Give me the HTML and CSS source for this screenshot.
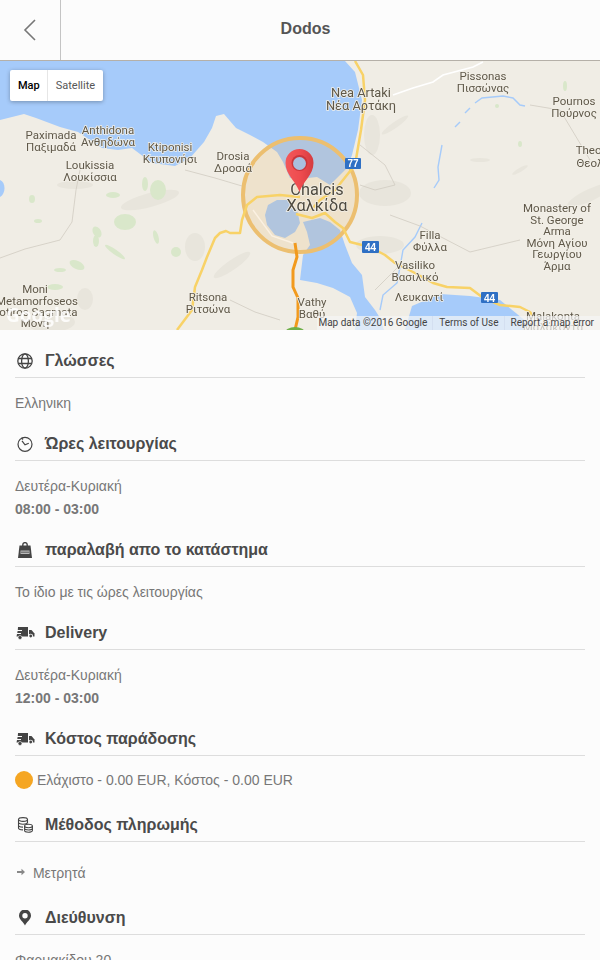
FILE: index.html
```html
<!DOCTYPE html>
<html lang="el">
<head>
  <meta charset="UTF-8" />
  <title>Dodos</title>
  <meta name="viewport" content="width=device-width, initial-scale=1">
  <link rel="stylesheet" href="styles.css">
</head>
<body>
  <header class="topbar">
    <a class="back" href="#">
      <svg width="16" height="24" viewBox="0 0 16 24"><path d="M13 2 3 12l10 10" fill="none" stroke="#777" stroke-width="1.6"/></svg>
    </a>
    <div class="title">Dodos</div>
    <div class="spare"></div>
  </header>

  <div class="map">
    <svg class="map-art" width="600" height="269" viewBox="0 61 600 269">
      <defs>
        <linearGradient id="pinFill" x1="0" x2="1" y1="0" y2="0">
          <stop offset="0" stop-color="#f2585a"/>
          <stop offset=".55" stop-color="#ee4b4e"/>
          <stop offset="1" stop-color="#d43c40"/>
        </linearGradient>
      </defs>
      <rect x="0" y="61" width="600" height="269" fill="#f0ede5"/>
      <!-- terrain -->
      <g fill="#e8e5dc">
        <ellipse cx="150" cy="200" rx="30" ry="7" transform="rotate(-15 150 200)"/>
        <ellipse cx="75" cy="185" rx="18" ry="4"/>
        <ellipse cx="195" cy="247" rx="10" ry="14"/>
        <ellipse cx="232" cy="265" rx="22" ry="5" transform="rotate(-35 232 265)"/>
        <ellipse cx="85" cy="299" rx="8" ry="11"/>
        <ellipse cx="395" cy="125" rx="16" ry="3" transform="rotate(-35 395 125)"/>
        <ellipse cx="385" cy="193" rx="26" ry="13"/>
        <ellipse cx="380" cy="245" rx="24" ry="9"/>
        <ellipse cx="372" cy="135" rx="8" ry="20"/>
        <ellipse cx="50" cy="322" rx="25" ry="10"/>
        <ellipse cx="590" cy="195" rx="25" ry="6" transform="rotate(-25 590 195)"/>
        <ellipse cx="480" cy="160" rx="10" ry="2"/>
        <ellipse cx="520" cy="170" rx="9" ry="2" transform="rotate(-30 520 170)"/>
      </g>
      <g fill="#d9e7ca">
        <ellipse cx="145" cy="184" rx="3" ry="7"/>
        <ellipse cx="158" cy="190" rx="8" ry="10"/>
        <ellipse cx="125" cy="222" rx="11" ry="8"/>
        <ellipse cx="113" cy="195" rx="7" ry="3"/>
        <ellipse cx="97" cy="232" rx="4" ry="6" transform="rotate(-30 97 232)"/>
        <ellipse cx="115" cy="252" rx="12" ry="2.500" transform="rotate(35 115 252)"/>
        <ellipse cx="96" cy="241" rx="3" ry="6"/>
        <ellipse cx="77" cy="265" rx="8" ry="4" transform="rotate(25 77 265)"/>
        <ellipse cx="176" cy="252" rx="5" ry="5"/>
        <ellipse cx="156" cy="237" rx="2.500" ry="7" transform="rotate(-15 156 237)"/>
        <ellipse cx="60" cy="270" rx="6" ry="2"/>
        <ellipse cx="32" cy="199" rx="3" ry="4"/>
        <ellipse cx="38" cy="221" rx="4" ry="2"/>
        <ellipse cx="55" cy="287" rx="8" ry="3"/>
        <ellipse cx="565" cy="86" rx="2" ry="5"/>
        <ellipse cx="520" cy="144" rx="2" ry="3"/>
        <ellipse cx="497" cy="106" rx="2" ry="2"/>
      </g>
      <!-- water -->
      <g fill="#a6cbfa">
        <path d="M0 61H345L355 72 362 100 358 130 352 155 347 168 330 185 317 177 308 178 290 178 283 162 277 152 263 142 250 135 236 128 224 114 216 116 212 128 204 142 190 158 175 166 152 163 132 148 118 150 102 148 78 132 60 127 36 118 24 114 0 120Z"/>
        <path d="M0 180c6 2 6 14 0 17Z"/>
        <path d="M268 205 277 200 288 200 297 210 300 223 295 232 285 238 275 235 267 225 265 215Z"/>
        <path d="M303 222 320 218 330 222 340 230 345 245 352 263 362 275 365 297 375 310 380 318 384 330H355L357 313 350 297 333 288 317 283 300 280 303 255 310 245 307 232Z"/>
        <path d="M405 330 412 306 440 294 470 296 500 300 522 318 536 330Z"/>
      </g>
      <g fill="none" stroke="#a6cbfa" stroke-width="1.400">
        <path d="M442 145 438 167 439 180 434 188"/>
        <path d="M460 122 455 127"/>
        <path d="M470 108 465 113"/>
        <path d="M475 103 482 98 503 96 513 98 520 105 525 106"/>
        <path d="M422 223 415 237 403 250 400 267 397 283 383 295 380 310"/>
      </g>
      <!-- borders -->
      <g fill="none" stroke="#d0ccc2" stroke-width=".8">
        <path d="M0 258 25 249 60 240 72 222 76 190 80 170"/>
        <path d="M185 170 215 178 242 186"/>
        <path d="M230 300 255 312 280 320"/>
        <path d="M360 145 385 165 395 185 375 190 360 185"/>
        <path d="M530 105 560 110 575 135 590 160"/>
        <path d="M390 215 420 226 470 252 520 240"/>
        <path d="M375 290 400 265"/>
      </g>
      <path d="M483 62 473 67 443 75 433 82 413 88 393 95" fill="none" stroke="#fff" stroke-width="1.600"/>
      <path d="M253 210 272 236 293 243" fill="none" stroke="#fff" stroke-width="1.400"/>
      <!-- range circle -->
      <circle cx="300" cy="195" r="57" fill="#e8ad55" fill-opacity=".17" stroke="#ecbf70" stroke-width="4"/>
      <!-- roads -->
      <g fill="none" stroke="#f8d267" stroke-width="2.500" stroke-linejoin="round">
        <path d="M355 61 363 75 365 100 361 130 355 165 347 175 335 190 320 200 311 210"/>
        <path d="M296 214 312 218 325 213 335 222 343 228 350 242 370 247 385 255 395 263 413 272 433 283 447 287 470 288 482 297 500 305 520 307 530 312 534 318"/>
        <path d="M300 197 280 195 257 197 247 205 242 220 240 233 230 233 226 231 220 233 215 238 207 257 202 270 195 287 192 310 177 330"/>
      </g>
      <path d="M295 243 297 257 293 270 293 287 298 298 298 317 295 330" fill="none" stroke="#f29a1d" stroke-width="3"/>
      <ellipse cx="295" cy="333" rx="10" ry="6" fill="#6fb04a"/>
      <!-- labels -->
      <g class="lbl">
        <text x="51" y="139">Paximada</text><text x="51" y="151">Παξιμαδά</text>
        <text x="108" y="134">Anthidona</text><text x="108" y="146">Ανθηδώνα</text>
        <text x="170" y="151">Ktiponisi</text><text x="170" y="163">Κτυπονήσι</text>
        <text x="233" y="160">Drosia</text><text x="233" y="172">Δροσιά</text>
        <text x="90" y="169">Loukissia</text><text x="90" y="181">Λουκίσσια</text>
        <text x="483" y="80">Pissonas</text><text x="483" y="92">Πισσώνας</text>
        <text x="574" y="105">Pournos</text><text x="574" y="117">Πούρνος</text>
        <text x="590" y="154">Theol</text><text x="590" y="167">Θεολ</text>
        <text x="557" y="212">Monastery of</text><text x="557" y="224">St. George</text>
        <text x="557" y="235">Arma</text><text x="557" y="247">Μόνη Αγίου</text>
        <text x="557" y="258">Γεωργίου</text><text x="557" y="270">Άρμα</text>
        <text x="430" y="239">Filla</text><text x="430" y="251">Φύλλα</text>
        <text x="415" y="269">Vasiliko</text><text x="415" y="281">Βασιλικό</text>
        <text x="419" y="301">Λευκαντί</text>
        <text x="312" y="306">Vathy</text><text x="312" y="318">Βαθύ</text>
        <text x="553" y="320">Malakonta</text><text x="553" y="331">Μαλάκοντα</text>
        <text x="208" y="301">Ritsona</text><text x="208" y="313">Ριτσώνα</text>
        <text x="35" y="293">Moni</text><text x="37" y="305">Metamorfoseos</text>
        <text x="35" y="316">Sotiros Sagmata</text><text x="35" y="327">Μονή</text>
      </g>
      <g class="lbl lbl-mid">
        <text x="361" y="97">Nea Artaki</text><text x="361" y="110">Νέα Αρτάκη</text>
      </g>
      <g class="lbl lbl-big">
        <text x="317" y="195">Chalcis</text><text x="317" y="211">Χαλκίδα</text>
      </g>
      <text class="logo" x="6" y="322">Google</text>
      <!-- shields -->
      <g class="shield">
        <rect x="345" y="158" width="16" height="11" rx="1"/><text x="353" y="167">77</text>
        <rect x="362" y="241" width="17" height="12" rx="1"/><text x="370.500" y="251">44</text>
        <rect x="481" y="292" width="17" height="11" rx="1"/><text x="489.500" y="302">44</text>
      </g>
      <!-- pin -->
      <path d="M299.500 192c-3-10-14-17-14-29a14 14 0 0 1 28 0c0 12-11 19-14 29z" fill="url(#pinFill)"/>
      <circle cx="299.500" cy="163" r="8" fill="#c9363b"/>
      <circle cx="299.500" cy="163.500" r="6.500" fill="#a9bfdf"/>
    </svg>

    <div class="map-type">
      <span class="map-btn on">Map</span>
      <span class="map-btn">Satellite</span>
    </div>
    <div class="attrib">
      <span>Map data ©2016 Google</span>
      <span>Terms of Use</span>
      <span>Report a map error</span>
    </div>
  </div>

  <div class="content">
    <section class="sec">
      <h2>
        <svg class="ico" viewBox="0 0 16 16" fill="none" stroke="#444" stroke-width="1.300"><circle cx="8" cy="8" r="7.200"/><ellipse cx="8" cy="8" rx="3.400" ry="7.200"/><path d="M1.500 5.500h13M1.500 10.500h13"/></svg>
        Γλώσσες
      </h2>
      <p>Ελληνικη</p>
    </section>

    <section class="sec">
      <h2>
        <svg class="ico" viewBox="0 0 16 16" fill="none" stroke="#444" stroke-width="1.200"><circle cx="8" cy="8.300" r="7"/><path d="M5 4.800 8 8.800l3.800-1.600"/><path d="M4.500 1.800 6 3.500"/></svg>
        Ώρες λειτουργίας
      </h2>
      <p>Δευτέρα-Κυριακή</p>
      <p class="hours">08:00 - 03:00</p>
    </section>

    <section class="sec">
      <h2>
        <svg class="ico" viewBox="0 0 16 16"><path d="M5.800 4V2.800a2.200 2.200 0 0 1 4.400 0V4" fill="none" stroke="#444" stroke-width="1.400"/><path d="M2.500 3.500h11L15 16H1z" fill="#444"/><path d="M3.500 8.500h9v3.500h-9z" fill="#bbb"/><path d="M4 10.200h8" stroke="#444" stroke-width=".8"/></svg>
        παραλαβή απο το κατάστημα
      </h2>
      <p>Το ίδιο με τις ώρες λειτουργίας</p>
    </section>

    <section class="sec">
      <h2>
        <svg class="ico ico-wide" viewBox="0 0 20 14"><path d="M3 1h10v9.500H1.500L2 8h4V7H2.300l.3-2H7V4H2.800z" fill="#444"/><path d="M14 4h2.500l3 3.500v3H14z" fill="#444"/><circle cx="5" cy="11.500" r="2" fill="#444" stroke="#fcfcfc" stroke-width=".6"/><circle cx="15.700" cy="10" r="2.300" fill="#fcfcfc"/><circle cx="15.700" cy="10" r="1.400" fill="#444"/></svg>
        Delivery
      </h2>
      <p>Δευτέρα-Κυριακή</p>
      <p class="hours">12:00 - 03:00</p>
    </section>

    <section class="sec sec-cost">
      <h2>
        <svg class="ico ico-wide" viewBox="0 0 20 14"><path d="M3 1h10v9.500H1.500L2 8h4V7H2.300l.3-2H7V4H2.800z" fill="#444"/><path d="M14 4h2.500l3 3.500v3H14z" fill="#444"/><circle cx="5" cy="11.500" r="2" fill="#444" stroke="#fcfcfc" stroke-width=".6"/><circle cx="15.700" cy="10" r="2.300" fill="#fcfcfc"/><circle cx="15.700" cy="10" r="1.400" fill="#444"/></svg>
        Κόστος παράδοσης
      </h2>
      <p class="cost"><span class="dot"></span>Ελάχιστο - 0.00 EUR, Κόστος - 0.00 EUR</p>
    </section>

    <section class="sec sec-pay">
      <h2>
        <svg class="ico" viewBox="0 0 16 16" fill="none" stroke="#444" stroke-width="1.100"><ellipse cx="6" cy="2.500" rx="4.500" ry="1.900"/><path d="M1.500 2.500v8.500c0 1 2 1.900 4.500 1.900M10.500 2.500v4M1.500 5.300c0 1 2 1.900 4.500 1.900s4.500-.9 4.500-1.900M1.500 8.200c0 1 2 1.900 4.500 1.900"/><ellipse cx="11.500" cy="9" rx="3.900" ry="1.700"/><path d="M7.600 9v4.500c0 1 1.800 1.700 3.900 1.700s3.900-.7 3.900-1.700V9M7.600 11.300c0 1 1.800 1.700 3.900 1.700s3.900-.7 3.900-1.700"/></svg>
        Μέθοδος πληρωμής
      </h2>
      <ul class="pay">
        <li>
          <svg class="arrow" width="8" height="8" viewBox="0 0 8 8"><path d="M0 3h4.500V.8L8 4 4.500 7.200V5H0z" fill="#888"/></svg>
          Μετρητά
        </li>
      </ul>
    </section>

    <section class="sec">
      <h2>
        <svg class="ico" viewBox="0 0 16 16"><path fill-rule="evenodd" d="M8 15.500C6.500 12 2 9.500 2 5.500a6 6 0 0 1 12 0C14 9.500 9.500 12 8 15.500zM8 3a2.700 2.700 0 1 0 0 5.400A2.700 2.700 0 0 0 8 3z" fill="#444"/></svg>
        Διεύθυνση
      </h2>
      <p>Φαρμακίδου 20</p>
    </section>
  </div>
</body>
</html>
```

FILE: styles.css
```css
html, body {
  margin: 0;
  padding: 0;
  background: #fcfcfc;
  font-family: 'Liberation Sans', Arial, sans-serif;
  color: #777;
  height: 960px;
  overflow: hidden;
}
.topbar {
  display: flex;
  height: 60px;
  border-bottom: 1px solid #b5b0a8;
}
.back {
  width: 60px;
  border-right: 1px solid #c4c4c4;
  display: flex;
  align-items: center;
  justify-content: center;
}
.title {
  flex: 1;
  text-align: center;
  line-height: 58px;
  font-size: 16px;
  font-weight: bold;
  color: #555;
}
.spare { width: 50px; }

.map {
  position: relative;
  height: 269px;
  overflow: hidden;
}
.map-art {
  display: block;
  filter: blur(.35px);
}
.lbl text {
  font-family: Roboto, sans-serif;
  font-size: 11.500px;
  text-anchor: middle;
  fill: #5f5849;
  stroke: #f3f0e8;
  stroke-width: 1.500px;
  paint-order: stroke;
}
.lbl-mid text { font-size: 12.800px; }
.lbl-big text {
  font-size: 16.300px;
  fill: #4f4a3f;
}
.logo {
  font-family: 'Open Sans', sans-serif;
  font-size: 19px;
  font-weight: bold;
  fill: #fff;
  fill-opacity: .85;
}
.shield rect { fill: #2f70c4; }
.shield text {
  font-family: 'Liberation Sans', sans-serif;
  font-size: 10px;
  font-weight: bold;
  fill: #fff;
  text-anchor: middle;
}
.map-type {
  position: absolute;
  left: 10px;
  top: 9px;
  height: 31px;
  display: flex;
  background: #fff;
  border-radius: 2px;
  box-shadow: 0 1px 4px rgba(0,0,0,.3);
  font-family: Roboto, sans-serif;
  font-size: 11px;
  color: #565656;
}
.map-btn {
  line-height: 31px;
  padding: 0 8px;
}
.map-btn.on {
  color: #000;
  font-weight: 500;
  padding-right: 7px;
  border-right: 1px solid #e6e6e6;
}
.attrib {
  position: absolute;
  right: 0;
  bottom: 0;
  display: flex;
  height: 14px;
  background: rgba(245,245,245,.7);
  font-family: Roboto, sans-serif;
  font-size: 10px;
  line-height: 14px;
  color: #444;
}
.attrib span {
  padding: 0 5px 0 6px;
  border-left: 1px solid #d4dff0;
}
.attrib span:first-child {
  border-left: 0;
  padding-left: 1px;
}
.attrib span:last-child { padding-right: 6px; }

.content { padding: 14px 15px 0; }
.sec { margin-bottom: 12px; }
.sec-cost { margin-bottom: 18px; }
.sec-pay { margin-bottom: 16px; }
.sec h2 {
  display: flex;
  align-items: center;
  margin: 0 0 14px;
  height: 33px;
  border-bottom: 1px solid #ddd;
  font-size: 16px;
  color: #4a4a4a;
}
.ico {
  width: 16px;
  height: 16px;
  margin: 0 12px 0 2px;
}
.ico-wide {
  width: 20px;
  height: 14px;
  margin: 0 10px 0 0;
}
.sec p {
  margin: 0;
  font-size: 14px;
  line-height: 23px;
}
.hours { font-weight: bold; }
.sec .cost {
  display: flex;
  align-items: center;
  height: 20px;
  line-height: 20px;
}
.dot {
  width: 18px;
  height: 18px;
  border-radius: 50%;
  background: #f5a623;
  margin-right: 4px;
}
.sec-pay .pay {
  list-style: none;
  margin: 0;
  padding: 6px 0 0;
  font-size: 14px;
  line-height: 23px;
}
.arrow { margin: 0 4px 2px 2px; }
```
